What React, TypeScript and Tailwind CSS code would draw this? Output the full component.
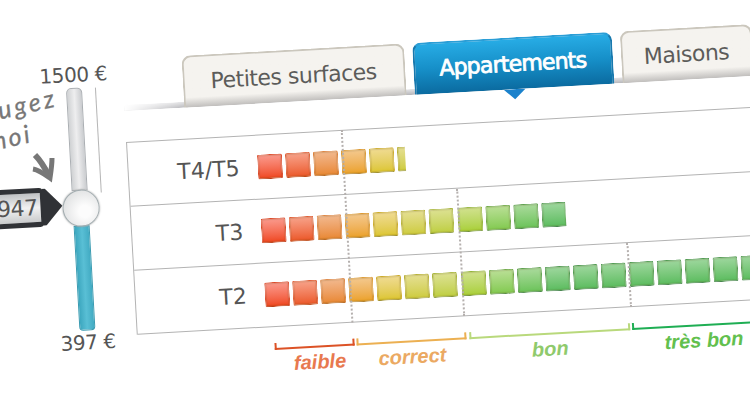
import clsx from 'clsx';

const tileColors = [
  'from-[#fa9c90] to-[#ee4112] border-[#dc4a2a] border-b-[#bb3c14]',
  'from-[#f7a48c] to-[#ea5420] border-[#e06038] border-b-[#bf4d1c]',
  'from-[#f2ba90] to-[#e8862c] border-[#dd8440] border-b-[#b96a24]',
  'from-[#f4ca90] to-[#eba01c] border-[#dc9a34] border-b-[#b08030]',
  'from-[#f1dc94] to-[#dcc526] border-[#cdac2c] border-b-[#a09030]',
  'from-[#e6e094] to-[#cdcb36] border-[#b9b238] border-b-[#97953a]',
  'from-[#dee294] to-[#bece3a] border-[#a8b53a] border-b-[#85953a]',
  'from-[#d3e290] to-[#a8cf30] border-[#94b53a] border-b-[#73933a]',
  'from-[#bce098] to-[#80c94c] border-[#72aa4a] border-b-[#5d8f48]',
  'from-[#acdb9e] to-[#68c256] border-[#60a250] border-b-[#4f8b4c]',
  'from-[#a0d8a0] to-[#58bb5c] border-[#549c54] border-b-[#4a8750]',
];

const rows = [
  { label: 'T4/T5', barWidth: 148 },
  { label: 'T3', barWidth: 305 },
  { label: 'T2', barWidth: 560 },
];

const dividers = [
  { left: 'left-[214px]', top: 'top-[-1px]' },
  { left: 'left-[326px]', top: 'top-[64px]' },
  { left: 'left-[493px]', top: 'top-[128px]' },
];

const ratings = [
  { label: 'faible', box: 'w-[80px]', line: 'border-[#dc5226]', text: 'text-[#e8794f] pl-[10px]' },
  { label: 'correct', box: 'w-[110px]', line: 'border-[#ecb052]', text: 'text-[#eba962]' },
  { label: 'bon', box: 'w-[161px]', line: 'border-[#b9d97c]', text: 'text-[#8fca6c]' },
  { label: 'très bon', box: 'w-[142px]', line: 'border-[#1fae54]', text: 'text-[#62c04e]' },
];

function Tab({ label, active, width }: { label: string; active?: boolean; width: string }) {
  return (
    <div
      className={clsx(
        'relative flex h-[52px] items-center justify-center rounded-t-[9px] border-2 border-b-0 pb-[2px] text-[22px] whitespace-nowrap',
        width,
        active
          ? 'border-[#1879ae] border-t-[#2b9ed6] bg-linear-to-b from-[#27ace5] via-[#168fc8] to-[#0b6ba0] text-white'
          : 'border-[#cbc7bd] bg-linear-to-b from-[#f5f3ef] from-80% to-[#c0bebc] text-[#5c5c5a]',
      )}
    >
      <span className={active ? 'tracking-[-0.8px] [-webkit-text-stroke:0.8px_white]' : 'tracking-[-0.5px]'}>
        {label}
      </span>
      {active && (
        <svg className="absolute top-[50px] left-[87px]" width="22" height="11" viewBox="0 0 22 11">
          <path d="M0 0H22L11 10Z" fill="#1b82cc" />
        </svg>
      )}
    </div>
  );
}

function Bar({ width }: { width: number }) {
  return (
    <div className="flex h-[25px] gap-[3.08px] overflow-hidden" style={{ width }}>
      {Array.from({ length: Math.ceil(width / 28.08) }, (_, i) => (
        <div
          key={i}
          className={clsx(
            'size-[25px] shrink-0 rounded-[2px] border bg-linear-to-b bg-origin-border shadow-[inset_0_0_1px_1px_rgba(90,60,0,0.16)]',
            tileColors[Math.min(i, tileColors.length - 1)],
          )}
        />
      ))}
    </div>
  );
}

function PriceSlider() {
  return (
    <div className="flex w-[160px] shrink-0">
      <div className="flex w-[74px] flex-col pt-[141px]">
        <div className="relative h-[39px] rounded-r-[4px] border-[5px] border-r-[3px] border-[#303236] bg-linear-to-b from-[#bfc1c3] via-[#f2f2f2] to-[#c9cbcc]">
          <span className="absolute top-0 right-[3px] text-[22px] leading-[29px] tracking-[-0.5px] text-[#555]">947</span>
          <svg className="absolute top-[-4px] left-[68px]" width="21" height="37" viewBox="0 0 21 37">
            <path d="M0 0H3L20 18L3 37H0Z" fill="#303236" />
          </svg>
        </div>
      </div>
      <div className="flex w-[74px] flex-col items-center pt-[18px] text-[#555]">
        <div className="text-[20px] leading-[24px] tracking-[-0.4px] whitespace-nowrap">1500 €</div>
        <div className="mt-[1px] flex h-[243px] w-[16px] flex-col items-center">
          <div className="h-[103px] w-full rounded-t-[5px] border border-[#aaaeb2] bg-linear-to-r from-[#d0d2d4] via-[#eeeeef] to-[#cbcdd0]" />
          <div className="z-10 -my-px size-[37px] shrink-0 rounded-full border border-[#a3adb0] bg-radial-[at_60%_60%] from-[#fcfcfc] from-20% to-[#d5d7d8] shadow-[0_0_2px_#999]" />
          <div className="w-full flex-1 rounded-b-[4px] border border-[#399bb1] bg-linear-to-r from-[#3ca7bf] via-[#59bfd5] to-[#42abc3]" />
        </div>
        <div className="text-[20px] leading-[24px] tracking-[-0.4px] whitespace-nowrap">397 €</div>
      </div>
    </div>
  );
}

function Note() {
  return (
    <div className="absolute top-0 left-0 font-['Lato','Liberation_Sans',sans-serif] text-[25px] leading-none text-[#777] italic [-webkit-text-stroke:0.3px_#777]">
      <span className="absolute top-[91px] left-[-3px] -rotate-13 tracking-[3.2px]">ugez</span>
      <span className="absolute top-[125px] left-[-14px] -rotate-13 tracking-[2.5px]">moi</span>
      <svg className="absolute top-[151px] left-[30px]" width="28" height="32" viewBox="0 0 28 32" fill="none" stroke="#777" strokeWidth="5">
        <path d="M5 4C10 9 14 15 19 25" strokeWidth="6" />
        <path d="M3 18C9 19 13 22 20 27C21 20 22 14 22 7" />
      </svg>
    </div>
  );
}

export default function App() {
  return (
    <div className="relative h-[400px] w-[750px] overflow-hidden bg-white font-['DejaVu_Sans',Verdana,sans-serif]">
      <div className="mt-[42px] -ml-[34px] flow-root">
        <div className="flex h-[380px] w-[900px] origin-[160px_100px] -rotate-[3.2deg]">
          <PriceSlider />
          <div className="relative flex w-[740px] flex-col pt-[17px]">
            <div className="absolute top-[63px] left-0 h-[6px] w-[640px] bg-linear-to-b from-[#e5e5e7] to-[#b5b5b9] mask-l-from-90% mask-l-to-100%" />
            <div className="relative flex gap-[8px] pl-[59.5px]">
              <Tab label="Petites surfaces" width="w-[223px]" />
              <Tab label="Appartements" width="w-[200px]" active />
              <Tab label="Maisons" width="w-[132px]" />
            </div>
            <div className="relative mt-[31px] border-t border-l border-[#b3b3b3]">
              {rows.map(({ label, barWidth }) => (
                <div key={label} className="flex h-[64px] items-center border-b border-[#b3b3b3]">
                  <span className="w-[111px] text-right text-[22px] text-[#555]">{label}</span>
                  <div className="pl-[18px]">
                    <Bar width={barWidth} />
                  </div>
                </div>
              ))}
              {dividers.map(({ left, top }) => (
                <div key={left} className={clsx('absolute bottom-0 border-l-2 border-dotted border-[#b5b0ae]', left, top)} />
              ))}
            </div>
            <div className="mt-[16px] flex gap-[2.5px] pl-[136.5px]">
              {ratings.map(({ label, box, line, text }) => (
                <div key={label} className={clsx('shrink-0', box)}>
                  <div className={clsx('h-[7px] border-2 border-t-0', line)} />
                  <div className={clsx("text-center font-['Liberation_Sans',Arial,sans-serif] text-[20px] leading-[28px] font-bold whitespace-nowrap italic", text)}>
                    {label}
                  </div>
                </div>
              ))}
            </div>
          </div>
          <div className="absolute top-[44px] left-[132px] h-[105px] w-px bg-[#b5b5b5]" />
        </div>
      </div>
      <Note />
    </div>
  );
}
